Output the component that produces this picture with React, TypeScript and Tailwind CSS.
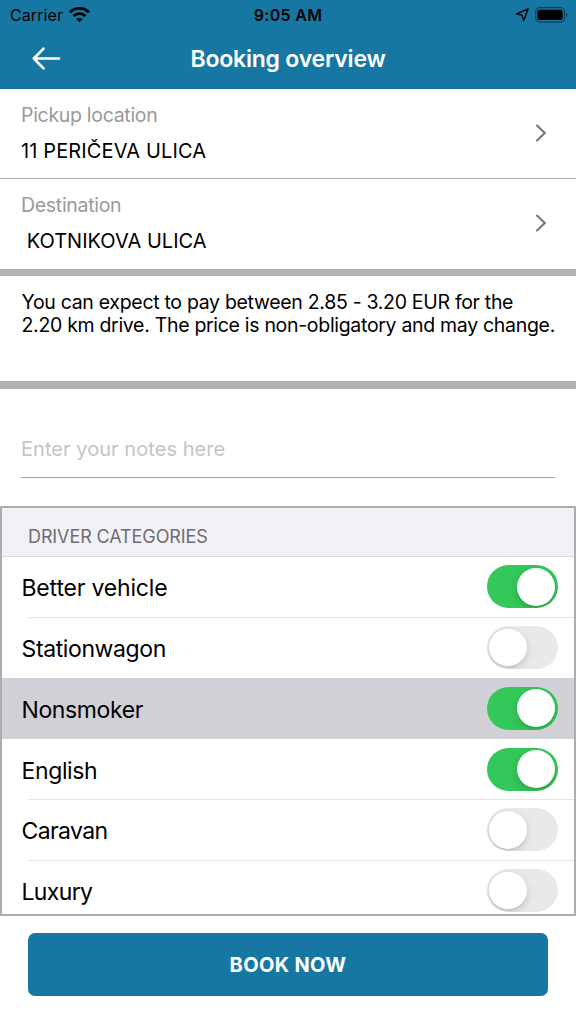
import { useState } from "react";
import clsx from "clsx";

interface Category {
  id: string;
  label: string;
  enabled: boolean;
  selected?: boolean;
  tracking: string;
}

const initialCategories: Category[] = [
  { id: "better", label: "Better vehicle", enabled: true, tracking: "tracking-[-0.18px]" },
  { id: "wagon", label: "Stationwagon", enabled: false, tracking: "tracking-[-0.38px]" },
  { id: "nonsmoker", label: "Nonsmoker", enabled: true, selected: true, tracking: "tracking-[-0.38px]" },
  { id: "english", label: "English", enabled: true, tracking: "tracking-[-0.38px]" },
  { id: "caravan", label: "Caravan", enabled: false, tracking: "tracking-[-0.6px]" },
  { id: "luxury", label: "Luxury", enabled: false, tracking: "tracking-[-0.65px]" }
];

function WifiIcon() {
  return (
    <svg width="21" height="16" viewBox="0 0 21 16" fill="none" stroke="#000" strokeWidth="2.8">
      <path d="M1 5.2C6.3 0.2 14.7 0.2 20 5.2" />
      <path d="M4.6 9C7.9 5.9 13.1 5.9 16.4 9" />
      <path d="M10.5 15.2L7.4 12.1C9.2 10.5 11.8 10.5 13.6 12.1Z" fill="#000" stroke="none" />
    </svg>
  );
}

function StatusBar() {
  return (
    <div className="grid h-[29px] grid-cols-3 items-center pl-2.5 pr-2 text-black">
      <div className="flex items-center gap-1.5">
        <span className="pt-px text-[16px] leading-[29px] tracking-[0.1px]">Carrier</span>
        <WifiIcon />
      </div>
      <span className="pr-0.5 pt-px text-center text-[16px] font-semibold leading-[29px] tracking-[0.3px]">9:05 AM</span>
      <div className="flex items-center justify-end gap-[6px]">
        <svg width="14" height="14" viewBox="0 0 14 14" fill="none" stroke="#000" strokeWidth="1.4" strokeLinejoin="round">
          <path d="M13.1 0.9L1.4 5.9L7 7.1L8.6 12.6Z" />
        </svg>
        <svg width="33" height="16" viewBox="0 0 33 16">
          <rect x="0.7" y="0.7" width="28.8" height="14.4" rx="4" fill="none" stroke="#000" strokeOpacity="0.45" strokeWidth="1.2" />
          <rect x="2.4" y="2.7" width="25.2" height="10.4" rx="2" />
          <path d="M30.8 5.4C32.8 6.3 32.8 9.5 30.8 10.4Z" fillOpacity="0.45" />
        </svg>
      </div>
    </div>
  );
}

interface LocationRowProps {
  title: string;
  value: string;
  className?: string;
  valueClassName?: string;
}

function LocationRow({ title, value, className, valueClassName }: LocationRowProps) {
  return (
    <div className={clsx("flex items-center justify-between pl-[21px] pr-[29px]", className)}>
      <div>
        <p className="text-[19.5px] leading-[26px] tracking-[-0.3px] text-[#999999]">{title}</p>
        <p className={clsx("mt-[10px] whitespace-pre text-[20px] leading-[26px] text-black", valueClassName)}>{value}</p>
      </div>
      <svg width="12" height="18" viewBox="0 0 12 18" fill="none" stroke="#777" strokeWidth="2.1" strokeLinecap="round">
        <path d="M2 1.5L9.8 9L2 16.5" />
      </svg>
    </div>
  );
}

function Toggle({ on, onChange }: { on: boolean; onChange: () => void }) {
  return (
    <button
      role="switch"
      aria-checked={on}
      onClick={onChange}
      className={clsx(
        "flex h-[43px] w-[71px] shrink-0 items-center overflow-hidden rounded-full px-[2.7px]",
        on ? "justify-end bg-[#34c759]" : "justify-start bg-[#e9e9eb]"
      )}
    >
      <span className="size-[37.8px] rounded-full bg-white shadow-[0_3px_8px_rgba(0,0,0,0.15),0_2px_1px_rgba(0,0,0,0.06)]" />
    </button>
  );
}

export default function App() {
  const [categories, setCategories] = useState(initialCategories);
  const [notes, setNotes] = useState("");

  const toggleCategory = (id: string) =>
    setCategories((list) => list.map((c) => (c.id === id ? { ...c, enabled: !c.enabled } : c)));

  return (
    <div className="flex h-[1024px] w-[576px] flex-col overflow-hidden bg-white font-['Inter','Liberation_Sans',sans-serif]">
      {/* Header */}
      <header className="h-[89.3px] shrink-0 bg-[#1777a3]">
        <StatusBar />
        <div className="grid h-[59px] grid-cols-[80px_1fr_80px] items-center">
          <button className="flex pl-8">
            <svg width="29" height="23" viewBox="0 0 29 23" fill="none" stroke="#fff" strokeWidth="2.6" strokeLinecap="round" strokeLinejoin="round">
              <path d="M11.5 1.7L1.8 11.5L11.5 21.3M1.8 11.5H27" />
            </svg>
          </button>
          <h1 className="pt-0.5 text-center text-[23px] font-semibold tracking-[-0.2px] text-white">Booking overview</h1>
        </div>
      </header>

      {/* Locations */}
      <LocationRow
        title="Pickup location"
        value="11 PERIČEVA ULICA"
        className="h-[89.4px] shrink-0 border-b border-[#a6a6a6]"
        valueClassName="tracking-[0.13px]"
      />
      <LocationRow
        title="Destination"
        value=" KOTNIKOVA ULICA"
        className="h-[90px] shrink-0 pb-px"
        valueClassName="tracking-[0.02px]"
      />

      {/* Price estimate */}
      <div className="h-[120.3px] shrink-0 border-b-8 border-t-[7px] border-[#b2b2b2] pl-[21.5px] pt-[15px]">
        <p className="whitespace-nowrap text-[19.5px] leading-[23.3px] tracking-[-0.31px] text-black">
          You can expect to pay between 2.85 - 3.20 EUR for the
          <br />
          2.20 km drive. The price is non-obligatory and may change.
        </p>
      </div>

      {/* Notes */}
      <div className="h-[117px] shrink-0 px-[21px] pt-[33px]">
        <input
          value={notes}
          onChange={(e) => setNotes(e.target.value)}
          placeholder="Enter your notes here"
          className="block h-[56px] w-full border-b border-[#a3a3a3] text-[20px] tracking-[0.05px] text-black outline-none placeholder:text-[#c4c4c6]"
        />
      </div>

      {/* Driver categories */}
      <section className="flex h-[409.7px] shrink-0 flex-col overflow-hidden border-2 border-[#acacaf]">
        <h2 className="h-[48.9px] shrink-0 border-b border-[#d9d9dc] bg-[#f2f1f8] pl-[26px] pt-[17px] text-[18px] leading-6 tracking-[-0.1px] text-[#6d6d72]">
          DRIVER CATEGORIES
        </h2>
        {categories.map((item, i) => (
          <div key={item.id} className={clsx("h-[60.75px] shrink-0 pl-[26px]", item.selected && "bg-[#d1d0d7]")}>
            <div
              className={clsx(
                "flex h-full items-center justify-between border-b pr-[16.5px]",
                item.selected || categories[i + 1]?.selected ? "border-transparent" : "border-[#e4e4e6]"
              )}
            >
              <span className={clsx("-ml-[6.5px] pt-[3px] text-[23px] leading-7 text-black", item.tracking)}>
                {item.label}
              </span>
              <Toggle on={item.enabled} onChange={() => toggleCategory(item.id)} />
            </div>
          </div>
        ))}
      </section>

      <button className="mx-7 mt-[17.5px] h-[62.5px] shrink-0 rounded-[7px] bg-[#1777a3] pt-0.5 text-[20px] font-bold tracking-[0.35px] text-white">
        BOOK NOW
      </button>
    </div>
  );
}
